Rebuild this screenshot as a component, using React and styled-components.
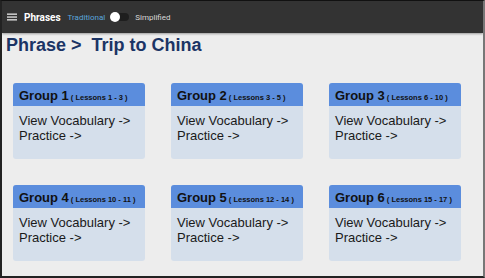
import React from "react";
import styled, { createGlobalStyle } from "styled-components";

const groups = [
  { id: 1, lessons: "1 - 3" },
  { id: 2, lessons: "3 - 5" },
  { id: 3, lessons: "6 - 10" },
  { id: 4, lessons: "10 - 11" },
  { id: 5, lessons: "12 - 14" },
  { id: 6, lessons: "15 - 17" },
];

const GlobalStyle = createGlobalStyle`
  html, body {
    margin: 0;
    padding: 0;
    background: #ffffff;
  }
`;

const Frame = styled.div`
  width: 485px;
  height: 278px;
  box-sizing: border-box;
  border-top: 1px solid #111;
  border-left: 2px solid #222;
  border-bottom: 2px solid #222;
  border-right: 2px solid #777;
  background: #ededed;
  overflow: hidden;
  font-family: "Liberation Sans", Arial, sans-serif;
`;

const AppBar = styled.header`
  height: 32px;
  background: #333333;
  display: flex;
  align-items: center;
  padding-left: 5px;
  box-shadow: 0 1px 2px rgba(0, 0, 0, 0.35);
  font-family: Roboto, "Liberation Sans", sans-serif;
`;

const MenuIcon = styled.svg`
  width: 10px;
  height: 10px;
  margin-right: 7px;
`;

const AppName = styled.span`
  color: #ffffff;
  font-weight: 700;
  font-size: 10px;
  margin-right: 7px;
`;

const Label = styled.span`
  font-size: 8px;
  color: ${(p) => (p.$active ? "#5aa6dc" : "#d8d8d8")};
`;

const Switch = styled.span`
  position: relative;
  width: 18px;
  height: 8px;
  border-radius: 4px;
  background: #1e1e1e;
  margin: 0 6px 0 6px;
  &::after {
    content: "";
    position: absolute;
    left: -1px;
    top: -1px;
    width: 10px;
    height: 10px;
    border-radius: 50%;
    background: #ffffff;
  }
`;

const Title = styled.h1`
  margin: 0;
  padding: 2px 0 0 4px;
  font-size: 18px;
  font-weight: 700;
  color: #1b3465;
  line-height: 21px;
`;

const Grid = styled.div`
  display: grid;
  grid-template-columns: repeat(3, 132px);
  column-gap: 26px;
  row-gap: 26px;
  margin: 27px 0 0 11px;
`;

const Card = styled.div`
  height: 76px;
  border-radius: 3px;
  overflow: hidden;
  background: #d5dfeb;
`;

const CardHeader = styled.div`
  height: 23px;
  background: #5b8ddd;
  display: flex;
  align-items: baseline;
  padding: 5px 0 0 6px;
  box-sizing: border-box;
  color: #111;
`;

const GroupName = styled.span`
  font-size: 13px;
  font-weight: 700;
  margin-right: 2px;
`;

const Lessons = styled.span`
  font-size: 7.5px;
  font-weight: 700;
`;

const CardBody = styled.div`
  padding: 7px 0 0 6px;
  font-size: 13px;
  line-height: 15px;
  color: #1a1a1a;
`;

export default function App() {
  return (
    <>
      <GlobalStyle />
      <Frame>
        <AppBar>
          <MenuIcon viewBox="0 0 10 10">
            <rect x="0" y="1.5" width="10" height="1.3" fill="#e6e6e6" />
            <rect x="0" y="4.4" width="10" height="1.3" fill="#e6e6e6" />
            <rect x="0" y="7.2" width="10" height="1.3" fill="#e6e6e6" />
          </MenuIcon>
          <AppName>Phrases</AppName>
          <Label $active>Traditional</Label>
          <Switch />
          <Label>Simplified</Label>
        </AppBar>
        <Title>Phrase &gt;&nbsp; Trip to China</Title>
        <Grid>
          {groups.map((g) => (
            <Card key={g.id}>
              <CardHeader>
                <GroupName>Group {g.id}</GroupName>
                <Lessons>( Lessons {g.lessons} )</Lessons>
              </CardHeader>
              <CardBody>
                View Vocabulary -&gt;
                <br />
                Practice -&gt;
              </CardBody>
            </Card>
          ))}
        </Grid>
      </Frame>
    </>
  );
}
